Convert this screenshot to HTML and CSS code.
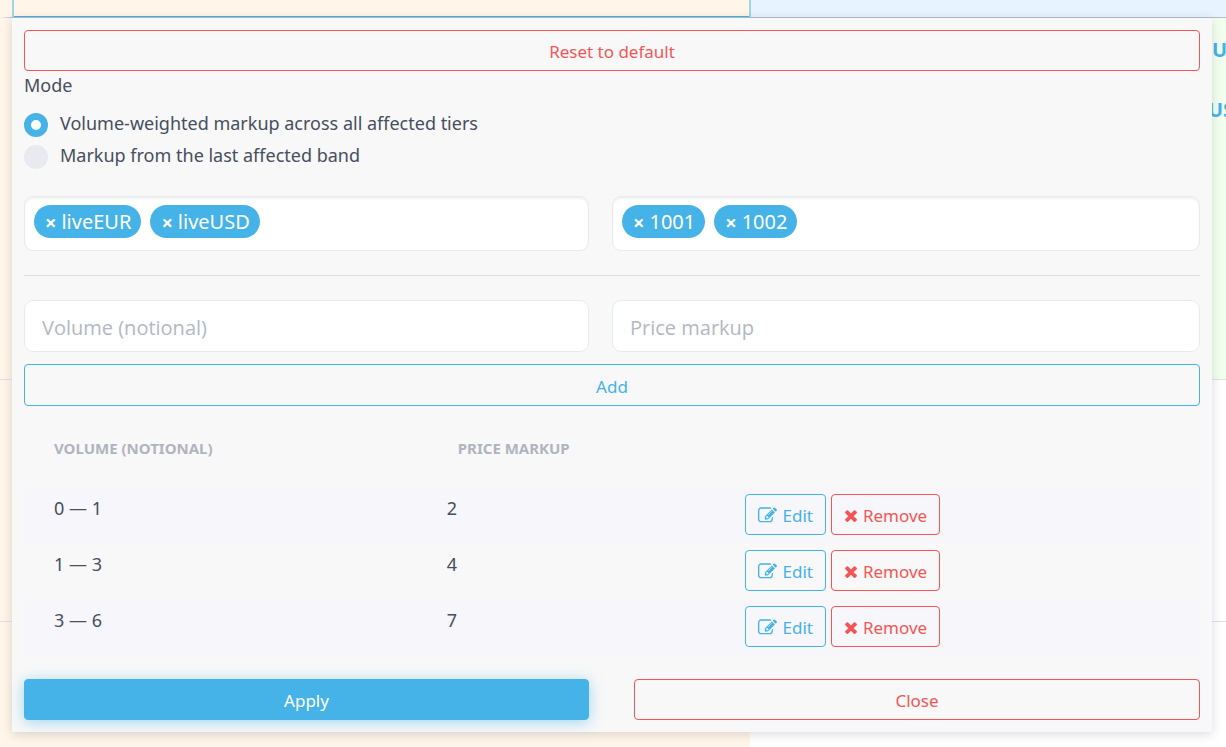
FILE: index.html
```html
<!doctype html>
<html lang="en">
    <head>
        <meta charset="utf-8">
        <title>Markup settings</title>
        <link rel="stylesheet" href="styles.css">
    </head>
    <body>
        <svg class="sprite" aria-hidden="true">
            <symbol id="icon-edit" viewBox="0 0 1792 1792">
                <path d="M888 1184l116-116-152-152-116 116v56h96v96h56zm440-720q-16-16-33 1l-350 350q-17 17-1 33t33-1l350-350q17-17 1-33zm80 594v190q0 119-84.500 203.500t-203.500 84.500h-832q-119 0-203.500-84.500t-84.500-203.500v-832q0-119 84.500-203.500t203.500-84.500h832q63 0 117 25 15 7 18 23 3 17-9 29l-49 49q-14 14-32 8-23-6-45-6h-832q-66 0-113 47t-47 113v832q0 66 47 113t113 47h832q66 0 113-47t47-113v-126q0-13 9-22l64-64q15-15 35-7t20 29zm-96-738l288 288-672 672h-288v-288zm444 132l-92 92-288-288 92-92q28-28 68-28t68 28l152 152q28 28 28 68t-28 68z"/>
            </symbol>
            <symbol id="icon-times" viewBox="192 0 1408 1792">
                <path d="M1490 1322q0 40-28 68l-136 136q-28 28-68 28t-68-28l-294-294-294 294q-28 28-68 28t-68-28l-136-136q-28-28-28-68t28-68l294-294-294-294q-28-28-28-68t28-68l136-136q28-28 68-28t68 28l294 294 294-294q28-28 68-28t68 28l136 136q28 28 28 68t-28 68l-294 294 294 294q28 28 28 68z"/>
            </symbol>
        </svg>

        <div class="page">
            <!-- grid behind the popup -->
            <div class="sheet">
                <div class="cell head selected"></div>
                <div class="cell head blue"></div>
                <div class="cell tall"></div>
                <div class="cell tall green">
                    <span class="symbol">U</span>
                    <span class="symbol wide">US</span>
                </div>
                <div class="cell mid"></div>
                <div class="cell mid white"></div>
                <div class="cell last"></div>
                <div class="cell last white"></div>
            </div>

            <form class="popup">
                <button type="button" class="btn danger block">Reset to default</button>

                <fieldset class="modes">
                    <legend>Mode</legend>
                    <label class="mode"><input type="radio" name="mode" checked> Volume-weighted markup across all affected tiers</label>
                    <label class="mode"><input type="radio" name="mode"> Markup from the last affected band</label>
                </fieldset>

                <div class="fields">
                    <div class="tags">
                        <span class="tag"><button type="button" class="tag-remove" aria-label="Remove liveEUR">×</button>liveEUR</span>
                        <span class="tag"><button type="button" class="tag-remove" aria-label="Remove liveUSD">×</button>liveUSD</span>
                    </div>
                    <div class="tags">
                        <span class="tag"><button type="button" class="tag-remove" aria-label="Remove 1001">×</button>1001</span>
                        <span class="tag"><button type="button" class="tag-remove" aria-label="Remove 1002">×</button>1002</span>
                    </div>
                </div>

                <hr class="line">

                <div class="fields">
                    <input class="input" type="text" placeholder="Volume (notional)" aria-label="Volume (notional)">
                    <input class="input" type="text" placeholder="Price markup" aria-label="Price markup">
                </div>
                <button type="button" class="btn primary block add">Add</button>

                <table class="bands">
                    <thead>
                        <tr>
                            <th class="volume">Volume (notional)</th>
                            <th class="price">Price markup</th>
                            <th></th>
                        </tr>
                    </thead>
                    <tbody>
                        <tr>
                            <td>0 — 1</td>
                            <td>2</td>
                            <td>
                                <div class="actions">
                                    <button type="button" class="btn primary"><svg class="icon-edit"><use href="#icon-edit"/></svg>Edit</button>
                                    <button type="button" class="btn danger"><svg class="icon-times"><use href="#icon-times"/></svg>Remove</button>
                                </div>
                            </td>
                        </tr>
                        <tr>
                            <td>1 — 3</td>
                            <td>4</td>
                            <td>
                                <div class="actions">
                                    <button type="button" class="btn primary"><svg class="icon-edit"><use href="#icon-edit"/></svg>Edit</button>
                                    <button type="button" class="btn danger"><svg class="icon-times"><use href="#icon-times"/></svg>Remove</button>
                                </div>
                            </td>
                        </tr>
                        <tr>
                            <td>3 — 6</td>
                            <td>7</td>
                            <td>
                                <div class="actions">
                                    <button type="button" class="btn primary"><svg class="icon-edit"><use href="#icon-edit"/></svg>Edit</button>
                                    <button type="button" class="btn danger"><svg class="icon-times"><use href="#icon-times"/></svg>Remove</button>
                                </div>
                            </td>
                        </tr>
                    </tbody>
                </table>

                <div class="footer">
                    <button type="button" class="btn filled">Apply</button>
                    <button type="button" class="btn danger">Close</button>
                </div>
            </form>
        </div>
    </body>
</html>
```
FILE: styles.css
```css
*{
    box-sizing: border-box;
}
body{
    margin: 0;
    color: #464e5f;
    font-family: 'Segoe UI', 'Noto Sans', 'Open Sans', sans-serif;
    font-size: 18px;
    line-height: 28px;
    background: #fff;
}
button, input{
    font-family: inherit;
}
.sprite{
    display: none;
}
.page{
    position: relative;
    min-height: 100vh;
    overflow: hidden;
}

/* SHEET */
.sheet{
    display: grid;
    grid-template-columns: 750px 1fr;
    grid-template-rows: 18px 362px 242px 1fr;
    min-height: 100vh;
}
.cell{
    background: #fff5e8;
    border-bottom: 1px solid #dee2e6;
    overflow: hidden;
}
.head{
    border-bottom-color: #b5bdc9;
}
.selected{
    border-left: 12px solid #fff5e8;
    box-shadow: inset 2px 0 #9dd6e9, inset -1px 0 #9dd6e9, inset 0 -1px #45b3e7;
}
.blue{
    background: #e7f4ff;
    box-shadow: inset 1px 0 #9dd6e9;
}
.green{
    background: #f3ffee;
    display: flex;
    flex-direction: column;
    align-items: flex-end;
    gap: 32px;
    padding-top: 18px;
}
.white{
    background: #fff;
    border-bottom-color: #dfe0ee;
}
.last{
    border-bottom: none;
}
.symbol{
    width: 14px;
    color: #45b3e7;
    font-size: 20px;
    font-weight: 700;
}
.wide{
    width: 18px;
}
/* SHEET END */

.popup{
    position: absolute;
    top: 18px;
    left: 12px;
    right: 14px;
    padding: 12px;
    background: #f8f8f8;
    box-shadow: 0 2px 10px rgba(50, 50, 80, 0.18);
}

.btn{
    display: flex;
    align-items: center;
    justify-content: center;
    height: 41px;
    padding: 2px 12px 0;
    background: transparent;
    border: 1px solid;
    border-radius: 4px;
    font-size: 17px;
    cursor: pointer;
}
.block{
    width: 100%;
}
.primary{
    color: #45b3e7;
    border-color: #45b3e7;
}
.danger{
    color: #f25656;
    border-color: #f25656;
}
.filled{
    color: #fff;
    background: #45b3e7;
    border-color: #45b3e7;
    box-shadow: 0 2px 14px rgba(69, 179, 231, 0.5);
}

/* MODE */
.modes{
    margin: 0;
    padding: 0;
    border: none;
}
.modes legend{
    padding: 0;
    margin-bottom: 10px;
}
.mode{
    display: flex;
    align-items: flex-start;
    gap: 12px;
    height: 32px;
}
.mode input{
    appearance: none;
    width: 24px;
    height: 24px;
    margin: 4px 0 0;
    border-radius: 50%;
    background: #e8eaef;
}
.mode input:checked{
    border: 7px solid #45b3e7;
    background: #fff;
}
/* MODE END */

.fields{
    display: grid;
    grid-template-columns: calc(50% - 23px) 1fr;
    column-gap: 23px;
}
.tags{
    display: flex;
    gap: 9px;
    height: 55px;
    margin-top: 23px;
    padding: 8px 9px;
    background: #fff;
    border: 1px solid #e9eaec;
    border-radius: 9px;
    box-shadow: inset 0 2px 2px rgba(0, 0, 0, 0.06);
}
.tag{
    display: flex;
    align-items: center;
    gap: 5px;
    height: 33px;
    padding: 1px 10px 0 11px;
    color: #fff;
    background: #45b3e7;
    border-radius: 17px;
    font-size: 20px;
}
.tag-remove{
    padding: 0;
    color: #fff;
    background: none;
    border: none;
    font-size: 20px;
    font-weight: 700;
    cursor: pointer;
}
.line{
    margin: 24px 0;
    border: none;
    border-top: 1px solid #dcdfe1;
}
.input{
    width: 100%;
    height: 52px;
    padding: 2px 17px 0;
    color: #464e5f;
    background: #fff;
    border: 1px solid #e9eaec;
    border-radius: 9px;
    font-family: 'Segoe UI', 'Open Sans', sans-serif;
    font-size: 20px;
}
.input::placeholder{
    color: #b3b8c4;
}
.add{
    height: 42px;
    margin-top: 12px;
}

/* BANDS */
.bands{
    width: 100%;
    margin-top: 2px;
    border-collapse: collapse;
    table-layout: fixed;
}
.bands th{
    height: 79px;
    padding: 0 30px;
    color: #b0b4be;
    font-size: 15px;
    font-weight: 700;
    text-align: left;
    text-transform: uppercase;
}
.bands .price{
    width: 25.4%;
    padding-left: 41px;
}
.bands .volume{
    width: 33.4%;
}
.bands td{
    height: 56px;
    padding: 7px 30px;
    vertical-align: top;
}
.bands tbody tr:nth-child(odd){
    background: #f6f6fb;
}
.actions{
    display: flex;
    gap: 5px;
}
.icon-edit, .icon-times{
    height: 19px;
    margin-right: 5px;
    fill: currentColor;
}
.icon-edit{
    width: 19px;
}
.icon-times{
    width: 14px;
}
/* BANDS END */

.footer{
    display: grid;
    grid-template-columns: calc(50% - 23px) 1fr;
    column-gap: 45px;
    margin-top: 24px;
}
```
